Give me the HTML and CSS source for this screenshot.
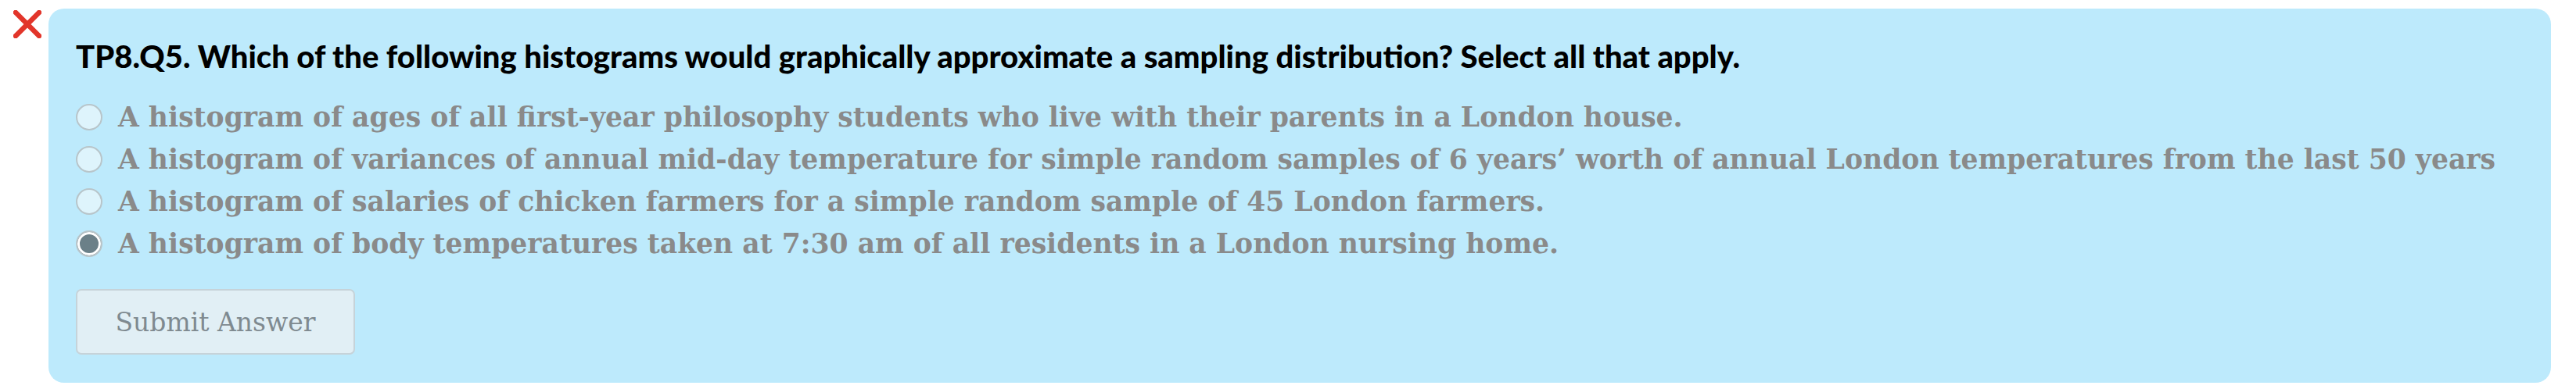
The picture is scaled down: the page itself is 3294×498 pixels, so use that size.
FILE: index.html
```html
<!DOCTYPE html>
<html>
<head>
<meta charset="utf-8">
<link rel="stylesheet" href="styles.css">
</head>
<body>
<div class="page">
  <div class="mark">
    <svg width="36" height="36" viewBox="0 0 36 36"><path d="M3 3 L33 33 M33 3 L3 33" stroke="#e2352a" stroke-width="6.5" stroke-linecap="square" fill="none"/></svg>
  </div>
  <div class="card">
    <div class="title">TP8.Q5. Which of the following histograms would graphically approximate a sampling distribution? Select all that apply.</div>
    <div class="options">
      <div class="option"><span class="radio"></span><span class="label">A histogram of ages of all first-year philosophy students who live with their parents in a London house.</span></div>
      <div class="option"><span class="radio"></span><span class="label">A histogram of variances of annual mid-day temperature for simple random samples of 6 years’ worth of annual London temperatures from the last 50 years</span></div>
      <div class="option"><span class="radio"></span><span class="label">A histogram of salaries of chicken farmers for a simple random sample of 45 London farmers.</span></div>
      <div class="option"><span class="radio checked"></span><span class="label">A histogram of body temperatures taken at 7:30 am of all residents in a London nursing home.</span></div>
    </div>
    <div class="actions"><button class="submit">Submit Answer</button></div>
  </div>
</div>
</body>
</html>
```
FILE: styles.css
```css
html, body { margin: 0; padding: 0; background: #ffffff; }
.page {
  display: flex;
  align-items: flex-start;
  padding: 11px 32px 0 17px;
}
.mark { width: 36px; height: 36px; margin-top: 2px; flex: none; }
.mark svg { display: block; }
.card {
  margin-left: 9px;
  flex: 1;
  background: #bdeafc;
  border-radius: 20px;
  padding: 38px 35px 35px 35px;
  box-sizing: border-box;
  height: 479px;
}
.title {
  font-family: Lato, "Liberation Sans", sans-serif;
  font-weight: 900;
  font-size: 40px;
  line-height: 47px;
  color: #000;
  white-space: nowrap;
}
.options { margin-top: 27px; display: flex; flex-direction: column; }
.option {
  display: flex;
  align-items: center;
  height: 54px;
}
.radio {
  width: 34px; height: 34px;
  box-sizing: border-box;
  border-radius: 50%;
  border: 2px solid #b8c5ca;
  background: #def4fc;
  flex: none;
  margin-right: 20px;
}
.radio.checked {
  background: #6b8088;
  box-shadow: inset 0 0 0 3px #ffffff;
}
.label {
  font-family: "DejaVu Serif", "Liberation Serif", serif;
  font-weight: 700;
  font-size: 34.6px;
  line-height: 54px;
  color: #8a8a8a;
  white-space: nowrap;
}
.actions { margin-top: 31px; }
.submit {
  width: 357px; height: 84px;
  box-sizing: border-box;
  background: #e1eff5;
  border: 2px solid #c6d3d9;
  border-radius: 7px;
  font-family: "DejaVu Serif", "Liberation Serif", serif;
  font-size: 33px;
  color: #7f8a90;
  padding: 0;
}
```
